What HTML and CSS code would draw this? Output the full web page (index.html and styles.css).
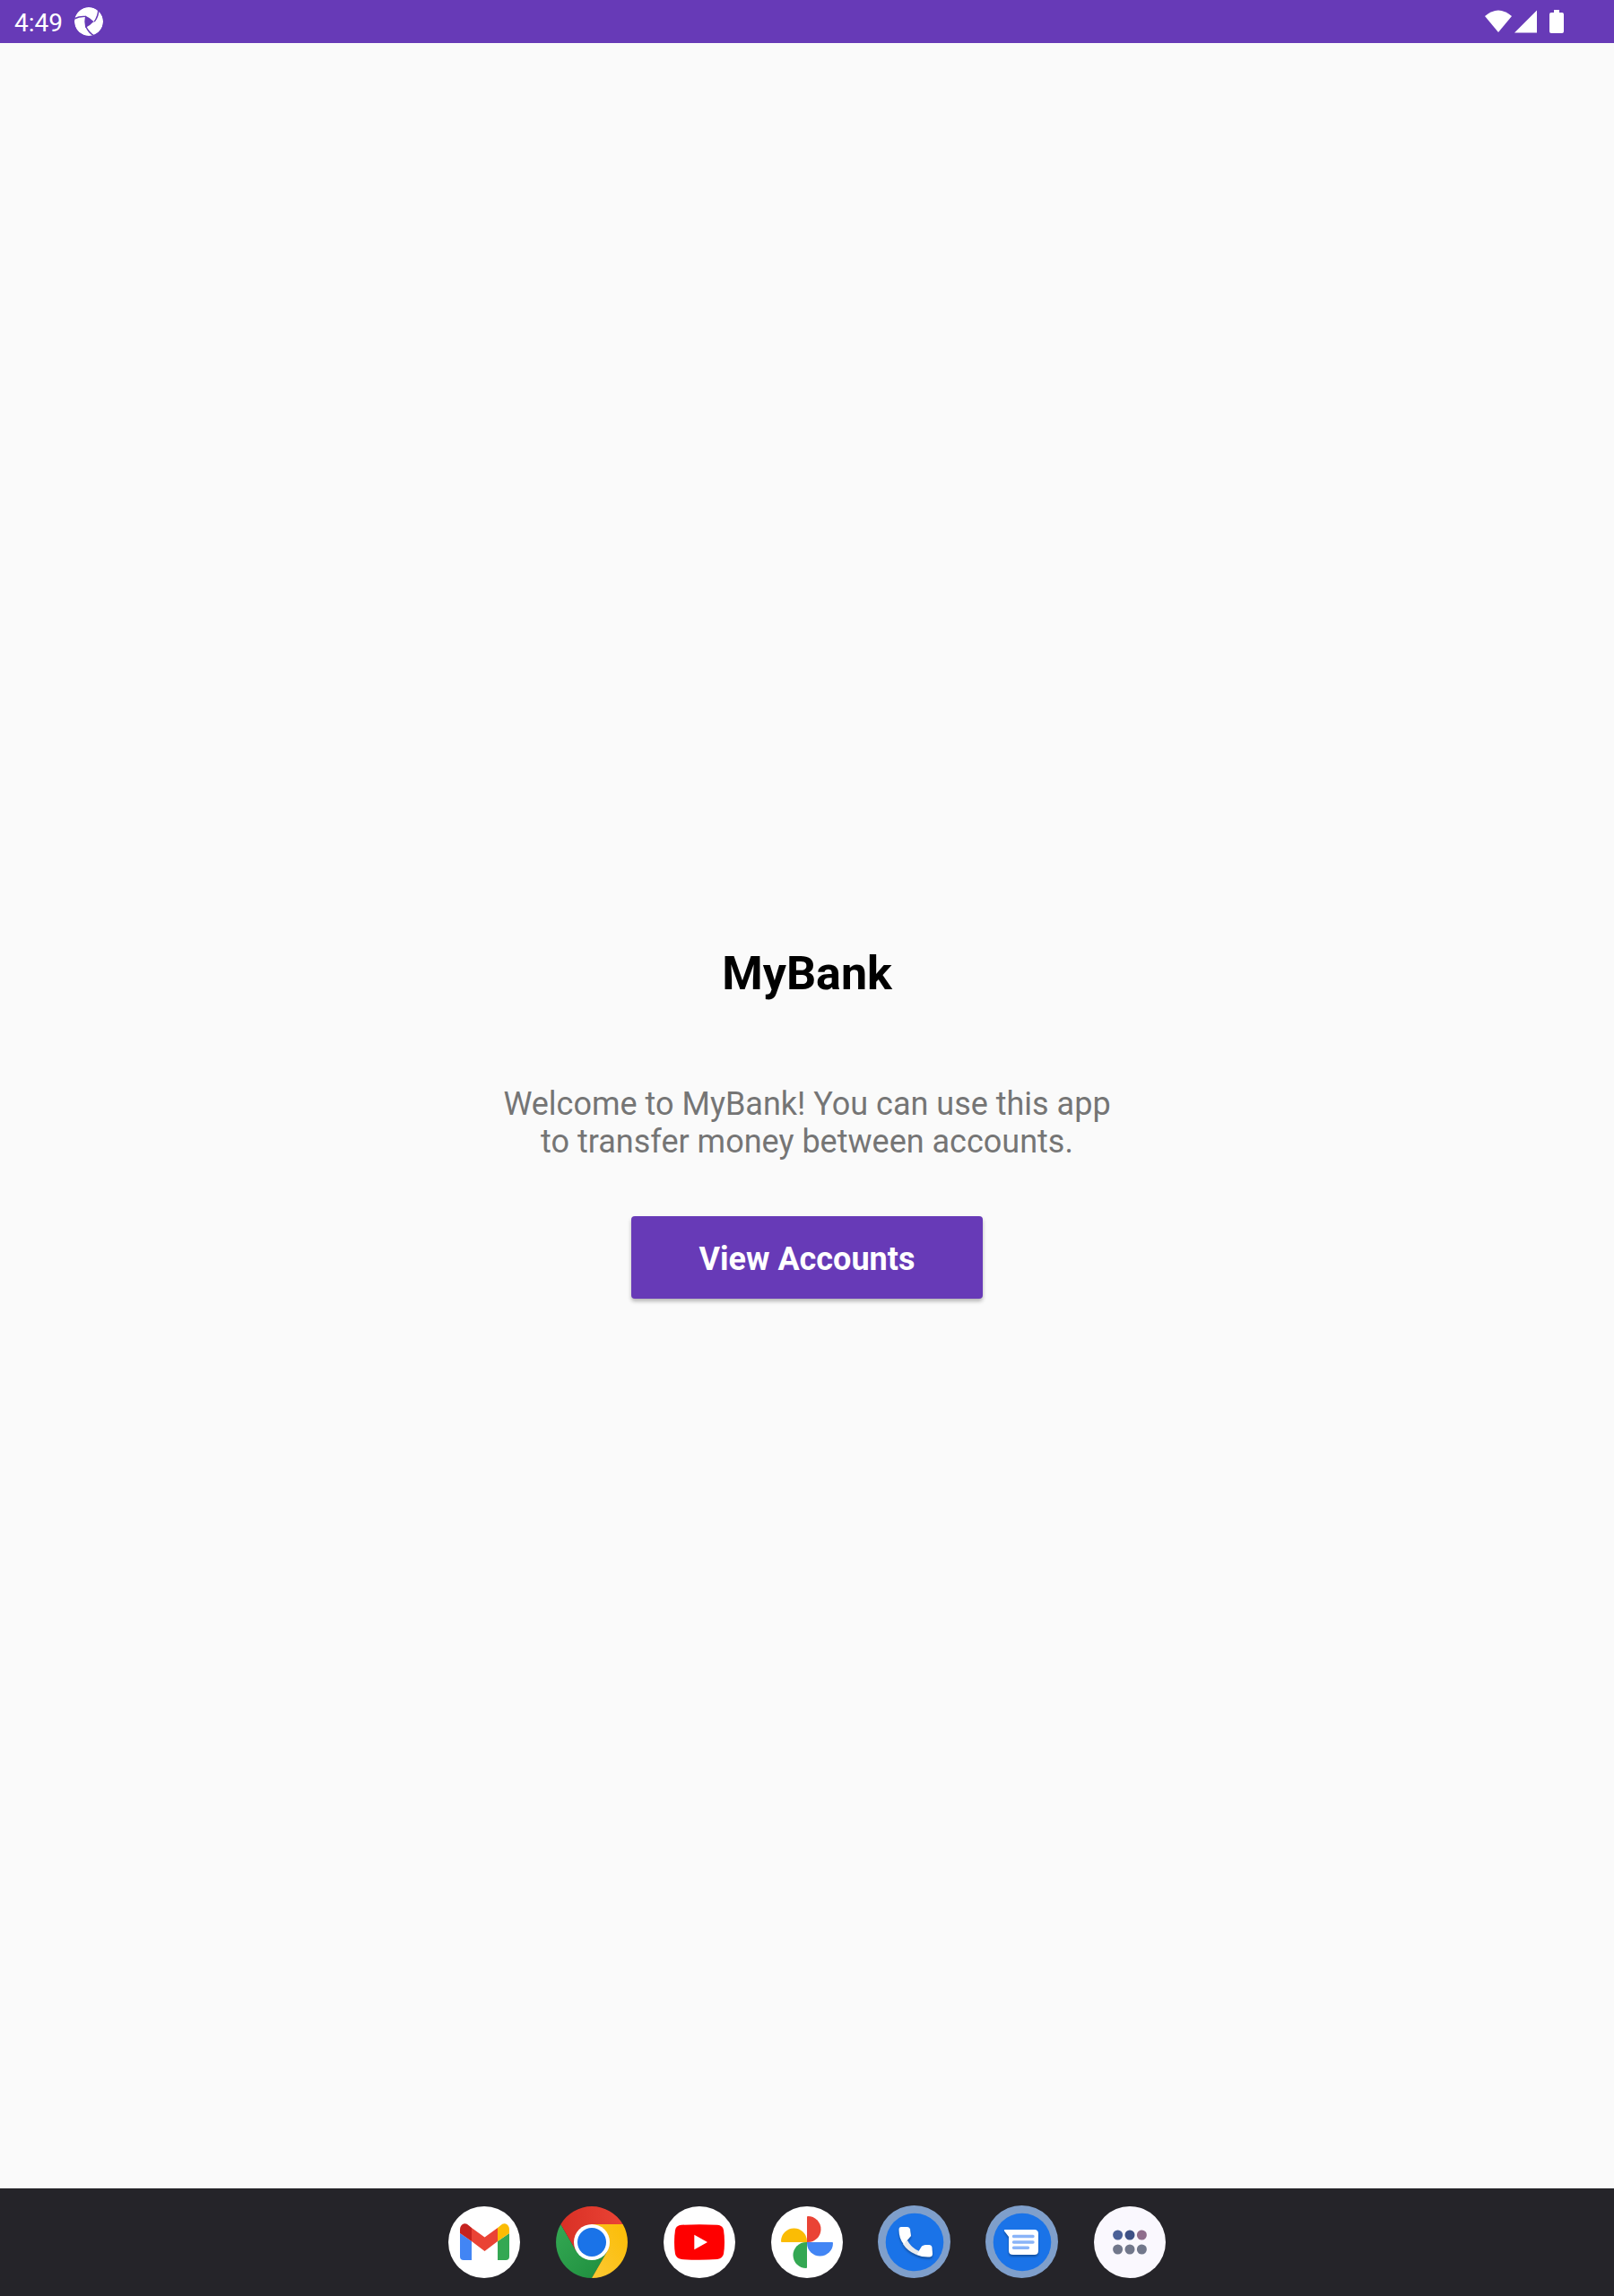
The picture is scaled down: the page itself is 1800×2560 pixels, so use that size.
FILE: index.html
```html
<!DOCTYPE html>
<html lang="en">
<head>
<meta charset="utf-8">
<meta name="viewport" content="width=device-width, initial-scale=1">
<title>MyBank</title>
<link rel="stylesheet" href="styles.css">
</head>
<body>
<header class="status-bar">
  <div class="status-left">
    <time class="clock">4:49</time>
    <svg class="notification" viewBox="0 0 32 32" aria-hidden="true">
      <circle cx="16" cy="16" r="16" fill="#fff"/>
      <path d="M12 9.500Q17 11.500 21.500 16Q17.500 20.500 12.200 23Q10.500 16 12 9.500Z" fill="#673ab7"/>
      <g fill="#673ab7">
        <path id="blade" d="M-1 12.500Q5 9 12.500 9.800L14 11.200Q5 10.500 -1 14.300Z"/>
        <use href="#blade" transform="rotate(120 16 16)"/>
        <use href="#blade" transform="rotate(240 16 16)"/>
      </g>
    </svg>
  </div>
  <div class="status-right">
    <svg class="signals" viewBox="0 0 88 26" aria-hidden="true" fill="#fff">
      <path d="M0 7Q15 -6 30 7L15 25Z"/>
      <path d="M33 25.500L58 .5V25.500Z"/>
      <path d="M77 0H83V3H86Q88 3 88 5V24Q88 26 86 26H74Q72 26 72 24V5Q72 3 74 3H77Z"/>
    </svg>
  </div>
</header>
<main class="welcome">
  <h1 class="title">MyBank</h1>
  <p class="message">Welcome to MyBank! You can use this app to transfer money between accounts.</p>
  <button class="primary" type="button">View Accounts</button>
</main>
<nav class="dock" aria-label="Apps">
  <button class="app" type="button" aria-label="Gmail">
    <svg viewBox="0 0 80 80">
      <circle cx="40" cy="40" r="40" fill="#fff"/>
      <path d="M13 30L26 39V60H17Q13 60 13 56Z" fill="#4285f4"/>
      <path d="M55 39L68 30V56Q68 60 64 60H55Z" fill="#34a853"/>
      <path d="M26 24L40.500 34.500L55 24V39L40.500 50L26 39Z" fill="#ea4335"/>
      <path d="M13 30V26Q13 21 17 19.500Q20 18.500 23 21.500L26 24V39Z" fill="#c5221f"/>
      <path d="M68 30V26Q68 21 64 19.500Q61 18.500 58 21.500L55 24V39Z" fill="#fbbc04"/>
    </svg>
  </button>
  <button class="app" type="button" aria-label="Chrome">
    <svg viewBox="0 0 80 80">
      <defs>
        <linearGradient id="red"><stop stop-color="#d93025"/><stop offset="1" stop-color="#ea4335"/></linearGradient>
        <linearGradient id="green" x1="0" y1="0" x2="1" y2="1"><stop stop-color="#34a853"/><stop offset="1" stop-color="#1e8e3e"/></linearGradient>
        <linearGradient id="yellow" x1="0" y1="1" x2="1" y2="0"><stop stop-color="#fcc934"/><stop offset="1" stop-color="#fbbc04"/></linearGradient>
      </defs>
      <path d="M40 40L57.300 50L40 80A40 40 0 0 1 5.400 20L22.700 50Z" fill="url(#green)"/>
      <path d="M40 20H74.600A40 40 0 0 1 40 80L57.300 50L40 40Z" fill="url(#yellow)"/>
      <path d="M5.400 20A40 40 0 0 1 74.600 20H40V40L22.700 50Z" fill="url(#red)"/>
      <circle cx="40" cy="40" r="20" fill="#fff"/>
      <circle cx="40" cy="40" r="16" fill="#1a73e8"/>
    </svg>
  </button>
  <button class="app" type="button" aria-label="YouTube">
    <svg viewBox="0 0 80 80">
      <circle cx="40" cy="40" r="40" fill="#fff"/>
      <path d="M20 20.800Q40 19.600 60 20.800Q66 21.200 67 26.500Q69 40 67 53Q66 58 60 59Q40 60.400 20 59Q14 58 13 53Q11 40 13 26.500Q14 21.200 20 20.800Z" fill="red"/>
      <path d="M34.300 31.700V48.300L49 40Z" fill="#fff"/>
    </svg>
  </button>
  <button class="app" type="button" aria-label="Photos">
    <svg viewBox="0 0 80 80">
      <circle cx="40" cy="40" r="40" fill="#fff"/>
      <path d="M40 40V12Q40 11 41 11A14.500 14.500 0 0 1 41 40Z" fill="#ea4335"/>
      <path d="M40 40H68Q69 40 69 41A14.500 14.500 0 0 1 40 41Z" fill="#4285f4"/>
      <path d="M40 40V68Q40 69 39 69A14.500 14.500 0 0 1 39 40Z" fill="#34a853"/>
      <path d="M40 40H12Q11 40 11 39A14.500 14.500 0 0 1 40 39Z" fill="#fbbc04"/>
    </svg>
  </button>
  <button class="app" type="button" aria-label="Phone">
    <svg viewBox="0 0 80 80">
      <circle cx="39.500" cy="39.500" r="40.500" fill="#7f9fcb"/>
      <circle cx="40" cy="40" r="32.300" fill="#1a73e8"/>
      <g class="lifted">
        <path d="M32 38Q36 46 45 50L42 54Q32 50 27 42Z" fill="#e8eaed"/>
        <path d="M25 23H32Q34.500 23 35 25.500L36 33L28 42.500Q22.500 36 22.500 26Q22.500 23 25 23Z" fill="#fff"/>
        <path d="M42 54L48 44.500Q50 43 52 43H56Q59 43 59.500 46L60 53Q60 56 57 56.500Q49 57 42 54Z" fill="#fff"/>
      </g>
    </svg>
  </button>
  <button class="app" type="button" aria-label="Messages">
    <svg viewBox="0 0 80 80">
      <circle cx="39.500" cy="39.500" r="40.500" fill="#7f9fcb"/>
      <circle cx="40" cy="40" r="32.300" fill="#1a73e8"/>
      <path class="lifted" d="M20.500 26H53.500Q58 26 58 30.500V49.500Q58 54 53.500 54H30Q25 54 25 49.500V34L20 27.500Q19.500 26 20.500 26Z" fill="#fff"/>
      <path d="M30.500 33.500H52M30.500 40H52M30.500 46.300H46.500" stroke="#8ab4f8" stroke-width="3.400" stroke-linecap="round"/>
    </svg>
  </button>
  <button class="app" type="button" aria-label="All apps">
    <svg viewBox="0 0 80 80">
      <circle cx="40" cy="40" r="40" fill="#faf8fe"/>
      <circle cx="26.600" cy="32" r="5.500" fill="#4b6097"/>
      <circle cx="40" cy="32" r="5.500" fill="#3e5186"/>
      <circle cx="53.400" cy="32" r="5.500" fill="#8f6d8c"/>
      <g fill="#71778b"><circle cx="26.600" cy="48" r="5.500"/><circle cx="40" cy="48" r="5.500"/><circle cx="53.400" cy="48" r="5.500"/></g>
    </svg>
  </button>
</nav>
</body>
</html>
```
FILE: styles.css
```css
* {
  box-sizing: border-box;
}

body {
  margin: 0;
  min-height: 100vh;
  display: flex;
  flex-direction: column;
  background: #fafafa;
  font-family: Roboto, "Liberation Sans", sans-serif;
}

.status-bar {
  display: flex;
  justify-content: space-between;
  align-items: center;
  height: 48px;
  padding: 0 56px 0 16px;
  background: #673ab7;
  color: #fff;
}

.status-left {
  display: flex;
  align-items: center;
  gap: 13px;
}

.clock {
  padding-top: 4px;
  font-size: 28px;
  line-height: 44px;
}

.notification {
  width: 32px;
  height: 32px;
  border-radius: 50%;
}

.signals {
  display: block;
  width: 88px;
  height: 26px;
}

.welcome {
  flex: 1;
  display: flex;
  flex-direction: column;
  align-items: center;
  justify-content: center;
  padding: 16px 16px 0;
  text-align: center;
}

.title {
  margin: 0 0 94px;
  font-size: 52px;
  line-height: 60px;
  font-weight: 700;
  color: #000;
}

.message {
  max-width: 704px;
  margin: 0 0 62px;
  font-size: 36px;
  line-height: 42px;
  color: #757575;
}

.primary {
  min-width: 392px;
  height: 92px;
  padding: 4px 32px 0;
  border: 0;
  border-radius: 4px;
  background: #673ab7;
  box-shadow: 0 3px 4px rgba(0, 0, 0, 0.28);
  color: #fff;
  font: 700 36px/42px Roboto, "Liberation Sans", sans-serif;
}

.dock {
  display: flex;
  justify-content: center;
  align-items: center;
  gap: 40px;
  height: 120px;
  background: #252429;
}

.app {
  width: 80px;
  height: 80px;
  padding: 0;
  border: 0;
  background: none;
}

.app svg {
  display: block;
  width: 80px;
  height: 80px;
  overflow: visible;
}

.lifted {
  filter: drop-shadow(0 2px 1px rgba(0, 0, 0, 0.3));
}
```
